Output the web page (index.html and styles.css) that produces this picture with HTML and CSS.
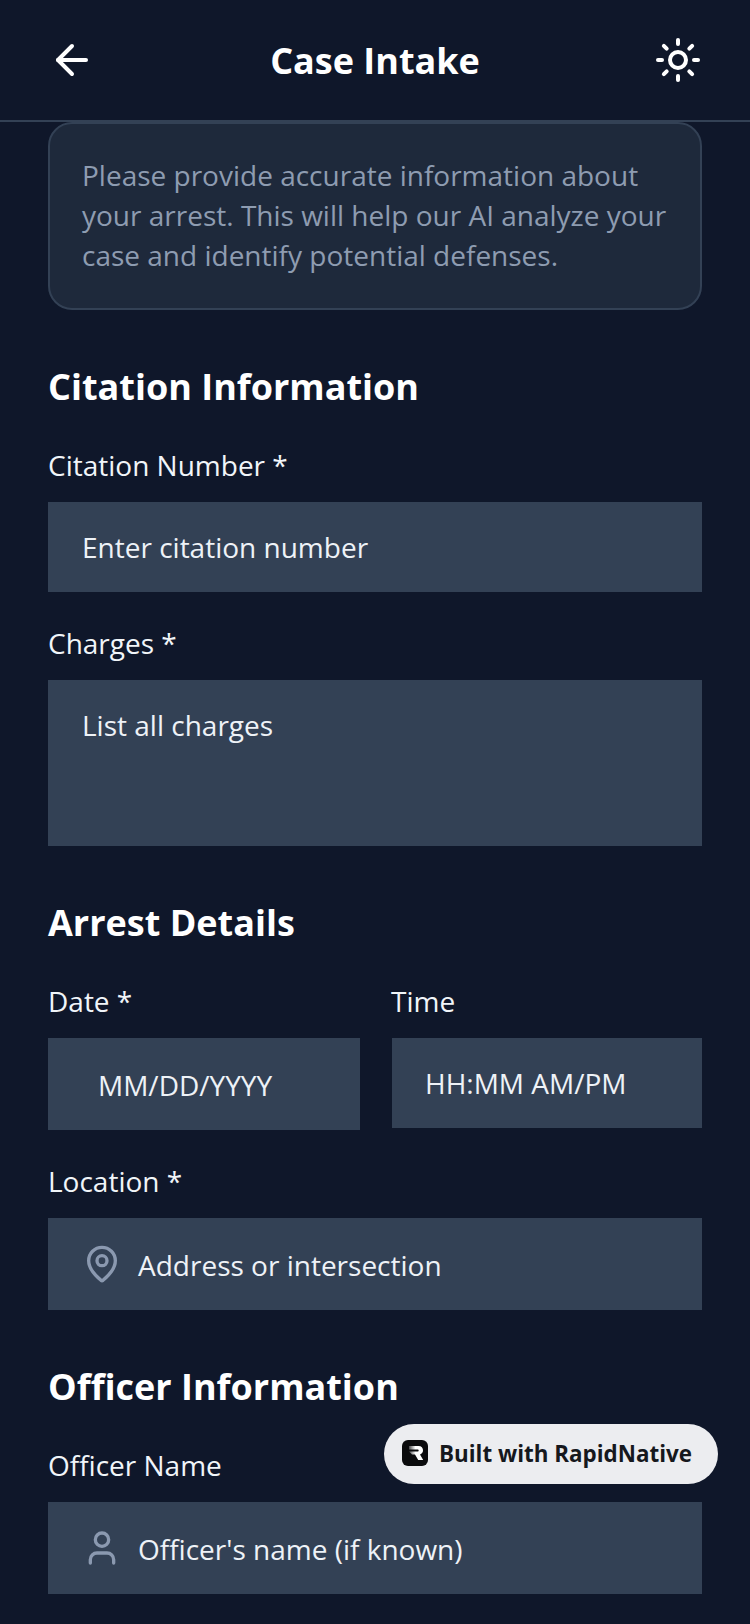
FILE: index.html
```html
<!DOCTYPE html>
<html lang="en">
<head>
<meta charset="utf-8">
<title>Case Intake</title>
<link rel="stylesheet" href="styles.css">
</head>
<body>
<div class="screen">
  <header class="header">
    <svg class="icon-back" viewBox="0 0 24 24" fill="none" stroke="#fff" stroke-width="2" stroke-linecap="round" stroke-linejoin="round"><path d="M19 12H5"/><path d="M12 19l-7-7 7-7"/></svg>
    <h1 class="title">Case Intake</h1>
    <svg class="icon-sun" viewBox="0 0 24 24" fill="none" stroke="#fff" stroke-width="2" stroke-linecap="round" stroke-linejoin="round"><circle cx="12" cy="12" r="4"/><path d="M12 2v2"/><path d="M12 20v2"/><path d="M4.93 4.93l1.41 1.41"/><path d="M17.66 17.66l1.41 1.41"/><path d="M2 12h2"/><path d="M20 12h2"/><path d="M6.34 17.66l-1.41 1.41"/><path d="M19.07 4.93l-1.41 1.41"/></svg>
  </header>
  <main class="content">
    <div class="info">Please provide accurate information about your arrest. This will help our AI analyze your case and identify potential defenses.</div>

    <h2 class="section">Citation Information</h2>
    <div class="label lead">Citation Number *</div>
    <div class="field">Enter citation number</div>
    <div class="label">Charges *</div>
    <div class="field area">List all charges</div>

    <h2 class="section">Arrest Details</h2>
    <div class="row">
      <div class="col">
        <div class="label lead">Date *</div>
        <div class="field date"><span class="nudge">MM/DD/YYYY</span></div>
      </div>
      <div class="col">
        <div class="label lead time-label">Time</div>
        <div class="field time">HH:MM AM/PM</div>
      </div>
    </div>
    <div class="label">Location *</div>
    <div class="field icon-field">
      <svg class="field-icon" viewBox="0 0 24 24" fill="none" stroke="#8b99b0" stroke-width="2" stroke-linecap="round" stroke-linejoin="round"><path d="M20 10c0 5-5.5 10.2-7.4 11.8a1 1 0 0 1-1.2 0C9.500 20.200 4 15 4 10a8 8 0 0 1 16 0"/><circle cx="12" cy="10" r="3"/></svg>
      <span class="nudge">Address or intersection</span>
    </div>

    <h2 class="section">Officer Information</h2>
    <div class="label lead">Officer Name</div>
    <div class="field icon-field">
      <svg class="field-icon" viewBox="0 0 24 24" fill="none" stroke="#8b99b0" stroke-width="2" stroke-linecap="round" stroke-linejoin="round"><path d="M19 21v-2a4 4 0 0 0-4-4H9a4 4 0 0 0-4 4v2"/><circle cx="12" cy="7" r="4"/></svg>
      <span class="nudge">Officer's name (if known)</span>
    </div>
  </main>
  <div class="badge">
    <svg class="badge-logo" viewBox="0 0 26 26"><defs><linearGradient id="rfade" x1="0" y1="0" x2="1" y2="0"><stop offset="0" stop-color="#fff" stop-opacity=".25"/><stop offset=".45" stop-color="#fff"/></linearGradient></defs><rect width="26" height="26" rx="6" fill="#0b0b0d"/><path d="M7 6h9.500c3 0 4.500 2 4.500 4.300 0 2-1 3.500-3 4.200l3.200 5.500h-5l-3.200-5.500H10l-3-3h8.500c.8 0 1.200-.5 1.200-1s-.4-1-1.200-1H7z" fill="url(#rfade)"/></svg>
    <span class="nudge">Built with RapidNative</span>
  </div>
</div>
</body>
</html>
```
FILE: styles.css
```css
* { box-sizing: border-box; margin: 0; padding: 0; }
html, body { width: 750px; height: 1624px; overflow: hidden; background: #0f172a; }
body { font-family: "Open Sans", sans-serif; color: #fff; }
.screen { position: relative; width: 750px; height: 1624px; overflow: hidden; background: #0f172a; }
.header {
  height: 122px;
  border-bottom: 2px solid #334155;
  display: flex;
  align-items: center;
  justify-content: space-between;
  padding: 0 48px;
}
.icon-back { width: 48px; height: 48px; }
.icon-sun { width: 48px; height: 48px; }
.title { font-size: 36px; line-height: 48px; font-weight: 700; color: #fff; padding-top: 2px; }
.content { padding: 0 48px; }
.info {
  height: 188px;
  padding: 31px 32px;
  background: #1e293b;
  border: 2px solid #334155;
  border-radius: 24px;
  font-size: 28px;
  line-height: 40px;
  color: #8e9cb1;
}
.section { font-size: 36px; line-height: 48px; font-weight: 700; color: #fff; margin-top: 53px; }
.label { font-size: 28px; line-height: 40px; color: #f1f5f9; margin-top: 31px; margin-bottom: 17px; }
.label.lead { margin-top: 34px; }
.label.time-label { margin-left: -1px; }
.field {
  height: 90px;
  background: #334155;
  padding: 0 34px;
  display: flex;
  align-items: center;
  font-size: 28px;
  line-height: 40px;
  color: #eef2f7;
}
.area { height: 166px; align-items: flex-start; padding-top: 25px; }
.row { display: grid; grid-template-columns: 312px 310px; column-gap: 32px; align-items: start; }
.date { height: 92px; padding-left: 50px; }
.time { padding-left: 33px; }
.nudge { padding-top: 2px; }
.icon-field { height: 92px; gap: 16px; }
.field-icon { width: 40px; height: 40px; flex: none; }
.badge {
  position: absolute;
  left: 384px;
  top: 1424px;
  width: 334px;
  height: 60px;
  border-radius: 30px;
  background: #ecedf0;
  display: flex;
  align-items: center;
  gap: 11px;
  padding: 0 0 2px 18px;
  font-size: 22.4px;
  line-height: 30px;
  font-weight: 700;
  color: #16181d;
}
.badge-logo { width: 26px; height: 26px; flex: none; }
```
